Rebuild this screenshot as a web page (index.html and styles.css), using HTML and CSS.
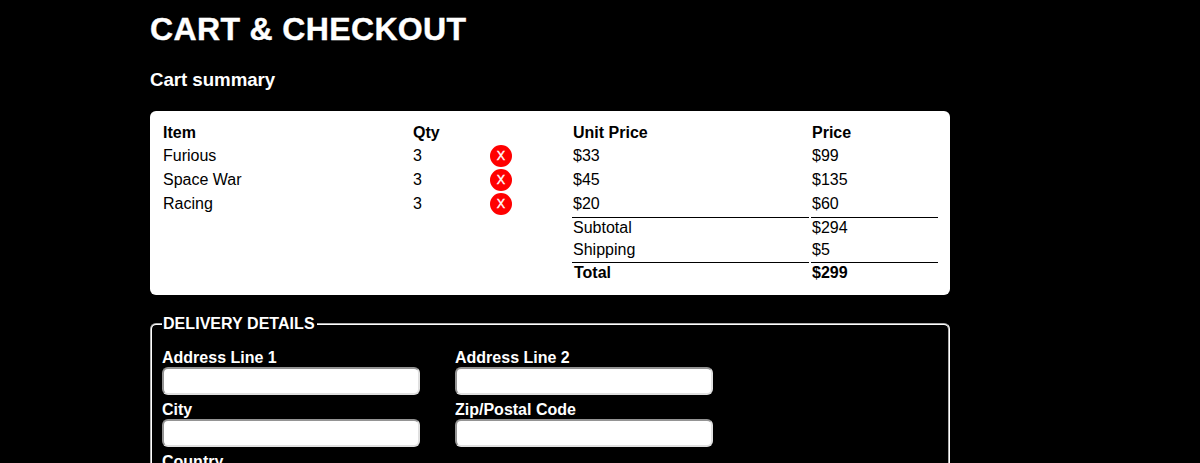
FILE: index.html
```html
<!DOCTYPE html>
<html lang="en">
<head>
<meta charset="utf-8">
<title>Cart &amp; Checkout</title>
<link rel="stylesheet" href="styles.css">
</head>
<body>
<main class="page">
  <h1 class="title">CART &amp; CHECKOUT</h1>
  <h2 class="subtitle">Cart summary</h2>
  <section class="summary">
    <table class="cart">
      <colgroup><col class="c-item"><col class="c-qty"><col class="c-del"><col class="c-unit"><col class="c-price"></colgroup>
      <tr><th>Item</th><th>Qty</th><th></th><th>Unit Price</th><th>Price</th></tr>
      <tr><td>Furious</td><td>3</td><td class="action"><button class="remove">X</button></td><td>$33</td><td>$99</td></tr>
      <tr><td>Space War</td><td>3</td><td class="action"><button class="remove">X</button></td><td>$45</td><td>$135</td></tr>
      <tr><td>Racing</td><td>3</td><td class="action"><button class="remove">X</button></td><td>$20</td><td>$60</td></tr>
      <tr><td colspan="3"></td><td class="line">Subtotal</td><td class="line">$294</td></tr>
      <tr><td colspan="3"></td><td>Shipping</td><td>$5</td></tr>
      <tr class="total"><td colspan="3"></td><td class="line">Total</td><td class="line">$299</td></tr>
    </table>
  </section>
  <fieldset class="delivery">
    <legend>DELIVERY DETAILS</legend>
    <div class="fields">
      <label class="field">Address Line 1<input class="input" type="text"></label>
      <label class="field">Address Line 2<input class="input" type="text"></label>
      <label class="field">City<input class="input" type="text"></label>
      <label class="field">Zip/Postal Code<input class="input" type="text"></label>
      <label class="field">Country<input class="input" type="text"></label>
    </div>
  </fieldset>
</main>
</body>
</html>
```
FILE: styles.css
```css
html { height: 100%; overflow: hidden; background: #000; }
body {
  height: 100%;
  margin: 0;
  overflow: hidden;
  background: #000;
  color: #fff;
  font: 16px/18px "Liberation Sans", Arial, sans-serif;
}
.page { width: 800px; margin-left: 150px; padding-top: 11px; }
.title {
  margin: 0;
  font-size: 32px;
  line-height: 37px;
  letter-spacing: 0.36px;
  -webkit-text-stroke: 0.4px #fff;
  stroke-linejoin: round;
  white-space: nowrap;
}
.subtitle {
  margin: 21px 0 20px;
  font-size: 18.72px;
  line-height: 22px;
  letter-spacing: -0.05px;
}
.summary { padding: 10px; border-radius: 6px; background: #fff; color: #000; }
.cart { width: 780px; table-layout: fixed; border-spacing: 2px; border-collapse: separate; }
.cart th, .cart td { padding: 1px; text-align: left; vertical-align: middle; }
.c-item { width: 248px; }
.c-qty { width: 75px; }
.c-del { width: 81px; }
.c-unit { width: 237px; }
.c-price { width: 127px; }
.cart .action { padding: 0 0 0 1px; }
.cart .line { border-top: 1px solid #000; }
.total { font-weight: bold; }
.total td:nth-child(2) { padding-left: 2px; }
.remove {
  display: block;
  width: 22px;
  height: 22px;
  padding: 0;
  border: 0;
  border-radius: 50%;
  background: #f00;
  color: #fff;
  font: 12.5px/22px "Liberation Sans", Arial, sans-serif;
  -webkit-text-stroke: 0.4px #fff;
  text-align: center;
}
.delivery {
  margin: 19px 0 0;
  padding: 0 10px 10px;
  border: 2px groove #fff;
  border-radius: 6px;
  min-width: 0;
}
.delivery legend { padding: 0 2px 0 1px; font-weight: bold; line-height: 19px; letter-spacing: 0.05px; }
.fields { display: grid; grid-template-columns: 258px 258px; gap: 6px 35px; padding-top: 16px; }
.field { display: flex; flex-direction: column; font-weight: bold; }
.input {
  box-sizing: border-box;
  width: 258px;
  height: 28px;
  border: 2px solid;
  border-color: #949494 #e0e0e0 #e0e0e0 #949494;
  border-radius: 6px;
  background: #fff;
}
```
